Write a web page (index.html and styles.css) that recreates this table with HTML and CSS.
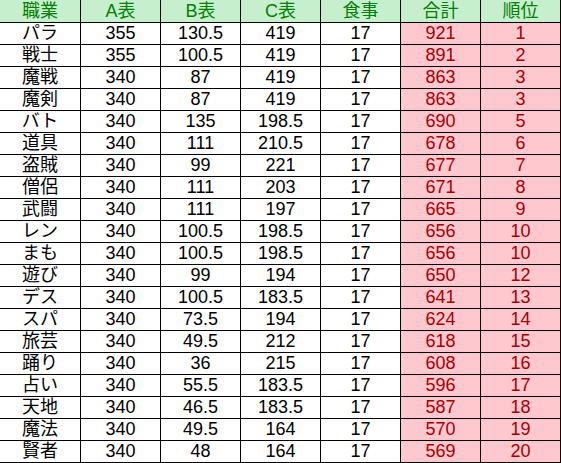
FILE: index.html
```html
<!DOCTYPE html>
<html lang="ja">
<head>
<meta charset="utf-8">
<title>表</title>
<link rel="stylesheet" href="styles.css">
</head>
<body>
<div class="sheet">
<div class="c h">職業</div><div class="c h">A表</div><div class="c h">B表</div><div class="c h">C表</div><div class="c h">食事</div><div class="c h">合計</div><div class="c h">順位</div>
<div class="c">パラ</div><div class="c">355</div><div class="c">130.5</div><div class="c">419</div><div class="c">17</div><div class="c r">921</div><div class="c r">1</div>
<div class="c">戦士</div><div class="c">355</div><div class="c">100.5</div><div class="c">419</div><div class="c">17</div><div class="c r">891</div><div class="c r">2</div>
<div class="c">魔戦</div><div class="c">340</div><div class="c">87</div><div class="c">419</div><div class="c">17</div><div class="c r">863</div><div class="c r">3</div>
<div class="c">魔剣</div><div class="c">340</div><div class="c">87</div><div class="c">419</div><div class="c">17</div><div class="c r">863</div><div class="c r">3</div>
<div class="c">バト</div><div class="c">340</div><div class="c">135</div><div class="c">198.5</div><div class="c">17</div><div class="c r">690</div><div class="c r">5</div>
<div class="c">道具</div><div class="c">340</div><div class="c">111</div><div class="c">210.5</div><div class="c">17</div><div class="c r">678</div><div class="c r">6</div>
<div class="c">盗賊</div><div class="c">340</div><div class="c">99</div><div class="c">221</div><div class="c">17</div><div class="c r">677</div><div class="c r">7</div>
<div class="c">僧侶</div><div class="c">340</div><div class="c">111</div><div class="c">203</div><div class="c">17</div><div class="c r">671</div><div class="c r">8</div>
<div class="c">武闘</div><div class="c">340</div><div class="c">111</div><div class="c">197</div><div class="c">17</div><div class="c r">665</div><div class="c r">9</div>
<div class="c">レン</div><div class="c">340</div><div class="c">100.5</div><div class="c">198.5</div><div class="c">17</div><div class="c r">656</div><div class="c r">10</div>
<div class="c">まも</div><div class="c">340</div><div class="c">100.5</div><div class="c">198.5</div><div class="c">17</div><div class="c r">656</div><div class="c r">10</div>
<div class="c">遊び</div><div class="c">340</div><div class="c">99</div><div class="c">194</div><div class="c">17</div><div class="c r">650</div><div class="c r">12</div>
<div class="c">デス</div><div class="c">340</div><div class="c">100.5</div><div class="c">183.5</div><div class="c">17</div><div class="c r">641</div><div class="c r">13</div>
<div class="c">スパ</div><div class="c">340</div><div class="c">73.5</div><div class="c">194</div><div class="c">17</div><div class="c r">624</div><div class="c r">14</div>
<div class="c">旅芸</div><div class="c">340</div><div class="c">49.5</div><div class="c">212</div><div class="c">17</div><div class="c r">618</div><div class="c r">15</div>
<div class="c">踊り</div><div class="c">340</div><div class="c">36</div><div class="c">215</div><div class="c">17</div><div class="c r">608</div><div class="c r">16</div>
<div class="c">占い</div><div class="c">340</div><div class="c">55.5</div><div class="c">183.5</div><div class="c">17</div><div class="c r">596</div><div class="c r">17</div>
<div class="c">天地</div><div class="c">340</div><div class="c">46.5</div><div class="c">183.5</div><div class="c">17</div><div class="c r">587</div><div class="c r">18</div>
<div class="c">魔法</div><div class="c">340</div><div class="c">49.5</div><div class="c">164</div><div class="c">17</div><div class="c r">570</div><div class="c r">19</div>
<div class="c">賢者</div><div class="c">340</div><div class="c">48</div><div class="c">164</div><div class="c">17</div><div class="c r">569</div><div class="c r">20</div>
</div>
</body>
</html>
```
FILE: styles.css
```css
html, body {
  margin: 0;
  padding: 0;
  background: #ffffff;
}
.sheet {
  display: grid;
  grid-template-columns: 81px repeat(6, 80px);
  grid-template-rows: 23px;
  grid-auto-rows: 22px;
  width: 561px;
  font-family: "Liberation Sans", "Noto Sans CJK JP", sans-serif;
  font-size: 18px;
  color: #000000;
}
.c {
  box-sizing: border-box;
  border-right: 1px solid #000000;
  border-bottom: 1px solid #000000;
  line-height: 21px;
  text-align: center;
  white-space: nowrap;
  overflow: hidden;
}
.h {
  background: #c6efce;
  color: #008000;
  line-height: 22px;
}
.r {
  background: #ffc7ce;
  color: #a80000;
}
```
